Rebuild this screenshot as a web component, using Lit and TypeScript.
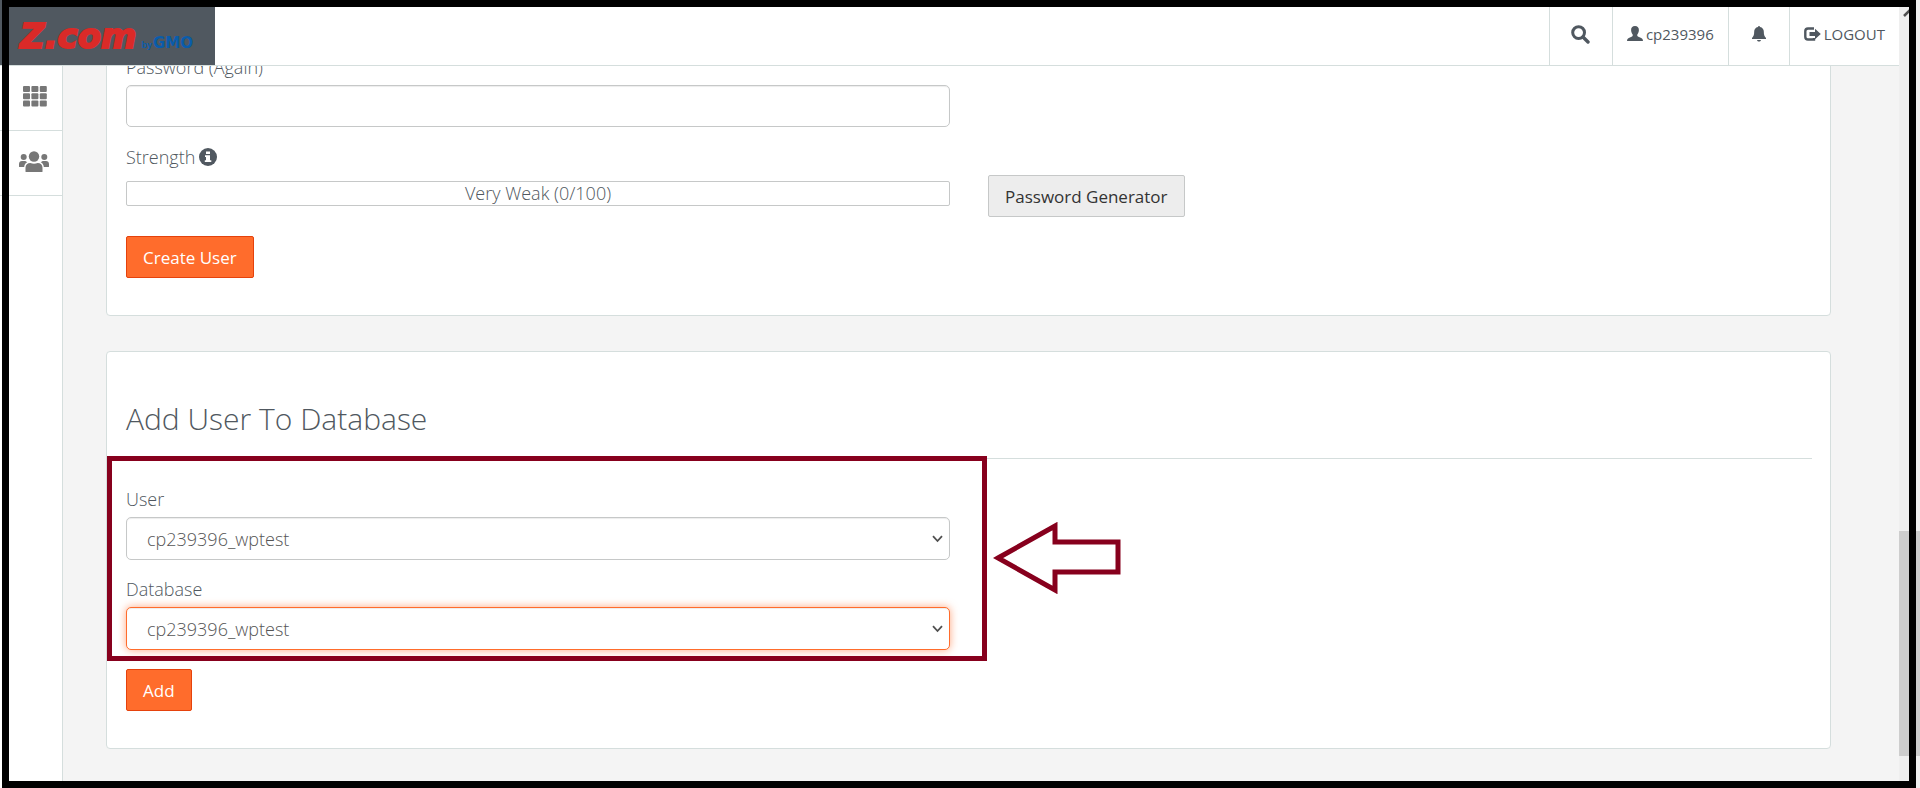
import { LitElement, html, css, svg } from "lit";
import { customElement } from "lit/decorators.js";

const gridIcon = svg`${[0, 1, 2].map((r) =>
  [0, 1, 2].map((c) => svg`<rect x=${c * 8.4} y=${r * 7.3} width="7" height="6" rx="1"></rect>`)
)}`;

@customElement("app-root")
class AppRoot extends LitElement {
  static styles = css`
    :host {
      display: block;
      font-family: "Open Sans", "Noto Sans", sans-serif;
      font-size: 18px;
      line-height: 26px;
      font-weight: 300;
      color: #505860;
    }
    * { box-sizing: border-box; }
    .window {
      position: relative;
      display: flex;
      height: 100vh;
      overflow: hidden;
      background: #f4f4f4;
    }
    .frame {
      position: absolute;
      inset: 0 4px 0 2px;
      border: 7px solid #000;
      pointer-events: none;
    }
    .app {
      flex: 1;
      min-width: 0;
      display: flex;
      flex-direction: column;
    }
    header {
      flex: none;
      display: flex;
      height: 66px;
      background: #fff;
      border-bottom: 1px solid #d5dedd;
    }
    .logo {
      display: flex;
      align-items: baseline;
      width: 215px;
      padding: 16px 0 0 20px;
      background: #505860;
      font-family: "DejaVu Sans", sans-serif;
      font-weight: 700;
      line-height: 40px;
      white-space: nowrap;
      text-decoration: none;
    }
    .brand {
      font-size: 34px;
      font-style: italic;
      color: #da2a28;
      -webkit-text-stroke: 2px #da2a28;
    }
    .by {
      padding-left: 5px;
      font: 700 9px "Liberation Sans", sans-serif;
      color: #0a5cab;
    }
    .gmo {
      padding-left: 1px;
      font-size: 15px;
      color: #0a5cab;
    }
    nav {
      display: flex;
      margin-left: auto;
    }
    nav button, nav a {
      display: flex;
      align-items: center;
      justify-content: center;
      gap: 3px;
      padding: 3px 14px 0;
      border: 0;
      border-left: 1px solid #d5dedd;
      background: #fff;
      color: #505860;
      font: 400 15px "Open Sans", sans-serif;
      text-decoration: none;
    }
    nav .icon { width: 61px; }
    nav .search { width: 63px; }
    svg { display: block; fill: currentColor; }
    .body {
      flex: 1;
      min-height: 0;
      display: flex;
    }
    aside {
      flex: none;
      width: 63px;
      background: #fff;
      border-right: 1px solid #d5dedd;
    }
    aside a {
      display: flex;
      align-items: center;
      justify-content: flex-end;
      height: 65px;
      padding: 0 13px 3px 0;
      border-bottom: 1px solid #d5dedd;
      color: #777;
    }
    aside .apps { padding-right: 15px; }
    main {
      flex: 1;
      min-width: 0;
      display: flex;
      flex-direction: column;
      justify-content: flex-end;
      gap: 35px;
      padding: 0 68px 39px 43px;
      overflow: hidden;
    }
    .card {
      flex: none;
      padding: 40px 18px 37px 19px;
      background: #fff;
      border: 1px solid #d5dedd;
      border-radius: 4px;
    }
    .row {
      display: grid;
      grid-template-columns: 1fr 1fr;
      gap: 38px;
      align-items: end;
    }
    label, .label {
      display: flex;
      align-items: center;
      gap: 4px;
      margin-bottom: 5px;
    }
    .strength {
      margin: 17px 0 11px;
    }
    input, select {
      display: block;
      width: 100%;
      height: 42px;
      border: 1px solid #c6c8c8;
      border-radius: 5px;
      background: #fff;
      box-shadow: inset 0 1px 1px rgba(0, 0, 0, 0.075);
      color: #555;
      font: inherit;
      outline: 0;
    }
    select {
      appearance: none;
      height: 43px;
      padding: 0 20px;
    }
    .active {
      border-color: #ff6c2c;
      box-shadow: inset 0 1px 1px rgba(0, 0, 0, 0.075), 0 0 8px rgba(255, 108, 44, 0.6);
    }
    .meter {
      height: 25px;
      border: 1px solid #c6c8c8;
      border-radius: 2px;
      line-height: 23px;
      text-align: center;
    }
    .btn {
      height: 42px;
      padding: 0 16px;
      border: 1px solid #e5420c;
      border-radius: 2px;
      background: #ff6c2c;
      color: #fff;
      font: 400 17px "Open Sans", sans-serif;
    }
    .plain {
      border-color: #c6c8c8;
      background: #ededed;
      color: #333;
    }
    .generate { margin-bottom: -11px; }
    .create { margin-top: 30px; }
    h2 {
      margin: 7px 0 27px;
      padding-bottom: 19px;
      border-bottom: 1px solid #d5dedd;
      font-size: 30px;
      line-height: 40px;
      font-weight: 300;
    }
    .fields {
      position: relative;
      display: grid;
      gap: 16px;
    }
    .control { position: relative; }
    .control svg {
      position: absolute;
      right: 7px;
      top: 18px;
      pointer-events: none;
    }
    .highlight {
      position: absolute;
      inset: -30px -37px -11px -19px;
      border: 5px solid #87001d;
      pointer-events: none;
    }
    .pointer {
      position: absolute;
      left: calc(100% + 43px);
      top: 36px;
    }
    .add { margin-top: 19px; }
    .scrollbar {
      flex: none;
      display: flex;
      flex-direction: column;
      justify-content: space-between;
      width: 21px;
      padding: 8px 0 32px;
      background: #efefef;
    }
    .thumb {
      height: 225px;
      background: #cdcdcd;
    }
  `;

  private select(id: string, label: string, cls = "") {
    return html`<div>
      <label for=${id}>${label}</label>
      <div class="control">
        <select id=${id} class=${cls}><option>cp239396_wptest</option></select>
        <svg width="11" height="8" viewBox="0 0 11 8"><path d="M1 1.2 5.5 6l4.5-4.8" fill="none" stroke="#505050" stroke-width="1.8"></path></svg>
      </div>
    </div>`;
  }

  render() {
    return html`<div class="window">
      <div class="app">
        <header>
          <a class="logo" href="#"><span class="brand">Z.com</span><span class="by">by</span><span class="gmo">GMO</span></a>
          <nav>
            <button class="search" aria-label="Search">
              <svg width="19" height="19" viewBox="0 0 19 19"><circle cx="7.6" cy="7.6" r="5.9" fill="none" stroke="currentColor" stroke-width="3"></circle><path d="M12 12l5 5" stroke="currentColor" stroke-width="3.4" stroke-linecap="round"></path></svg>
            </button>
            <button>
              <svg width="16" height="16" viewBox="0 0 16 16"><path d="M8 0c2.600 0 4.100 1.800 3.900 4.300C11.800 6.200 11.200 7.300 10.500 8.200c-.5.700-.3 1.900.4 2.300l3.300 1.600c1.100.5 1.600 1.200 1.800 2.900H0c.2-1.700.7-2.400 1.800-2.900l3.300-1.600c.7-.4.9-1.600.4-2.300C4.800 7.300 4.200 6.200 4.100 4.300 3.900 1.800 5.400 0 8 0z"></path></svg>
              cp239396
            </button>
            <button class="icon" aria-label="Notifications">
              <svg width="14" height="16" viewBox="0 0 14 16"><path d="M6 1a1 1 0 0 1 2 0c2.500.5 3.800 2.400 3.800 4.500 0 3.500.7 4.800 2.200 6.400V13H0v-1.100C1.500 10.300 2.200 9 2.200 5.500 2.200 3.400 3.500 1.500 6 1zM5 14h4c-.3 1-1 1.500-2 1.500S5.300 15 5 14z"></path></svg>
            </button>
            <a href="#">
              <svg width="17" height="14" viewBox="0 0 17 14"><path d="M10 1.500H4A2.700 2.700 0 0 0 1.300 4.200v5.600A2.700 2.700 0 0 0 4 12.500h6V11" fill="none" stroke="currentColor" stroke-width="2.400"></path><path d="M5.500 5H11V1.800L16.800 7 11 12.200V9H5.500z"></path></svg>
              LOGOUT
            </a>
          </nav>
        </header>
        <div class="body">
          <aside>
            <a class="apps" href="#" aria-label="Tools"><svg width="24" height="21" viewBox="0 0 24 21">${gridIcon}</svg></a>
            <a href="#" aria-label="Users"><svg width="30" height="21" viewBox="0 0 30 21"><circle cx="15" cy="5.500" r="5.200"></circle><circle cx="4.700" cy="6" r="3"></circle><circle cx="25.300" cy="6" r="3"></circle><path d="M6.500 20.500v-3.700c0-3 2-4.800 4.800-4.800 2.500 1 4.900 1 7.400 0 2.800 0 4.800 1.800 4.800 4.800v3.700q0 .5-.8.500H7.300q-.8 0-.8-.5zM0 15.500V13c0-1.800 1.200-3 3-3h3.300l2 1.300C6.300 12.200 5.300 14 5.200 16H.8q-.8 0-.8-.5zM30 15.500V13c0-1.800-1.200-3-3-3h-3.300l-2 1.300c2 .9 3 2.700 3.100 4.700h4.400q.8 0 .8-.5z"></path></svg></a>
          </aside>
          <main>
            <section class="card">
              <div class="row">
                <div>
                  <label for="again">Password (Again)</label>
                  <input id="again" type="password">
                </div>
              </div>
              <div class="row">
                <div>
                  <div class="label strength">Strength
                    <svg width="18" height="18" viewBox="0 0 18 18"><circle cx="9" cy="9" r="9"></circle><path fill="#fff" d="M7 3.500h4V6H7zM6 7.200h5v5h1.300V14H5.800v-1.800H7V9H6z"></path></svg>
                  </div>
                  <div class="meter">Very Weak (0/100)</div>
                </div>
                <div class="generate"><button class="btn plain">Password Generator</button></div>
              </div>
              <button class="btn create">Create User</button>
            </section>
            <section class="card">
              <h2>Add User To Database</h2>
              <div class="row">
                <div class="fields">
                  ${this.select("user", "User")}
                  ${this.select("database", "Database", "active")}
                  <div class="highlight"></div>
                  <svg class="pointer" width="130" height="72" viewBox="0 0 130 72"><path d="M5 36 62 4v16h63v30H62v18z" fill="#fff" stroke="#87001d" stroke-width="5"></path></svg>
                </div>
              </div>
              <button class="btn add">Add</button>
            </section>
          </main>
        </div>
      </div>
      <div class="scrollbar">
        <svg width="21" height="10" viewBox="0 0 21 10"><path d="M5 8l5-5 5 5" fill="none" stroke="#505050" stroke-width="2.500"></path></svg>
        <div class="thumb"></div>
      </div>
      <div class="frame"></div>
    </div>`;
  }
}
